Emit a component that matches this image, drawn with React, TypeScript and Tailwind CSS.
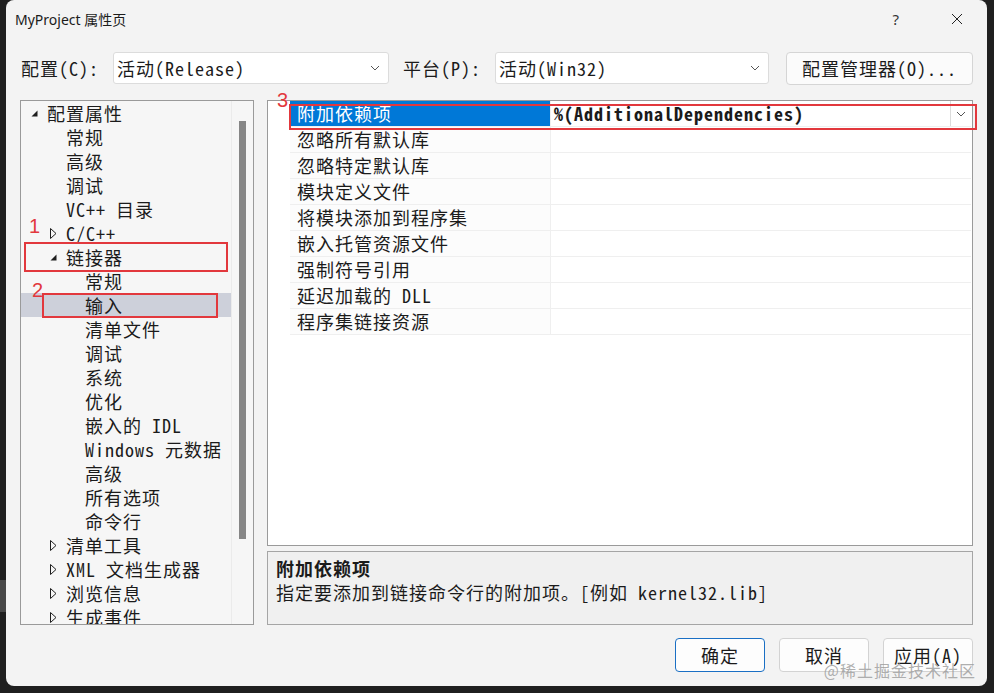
import React from "react";

const MONO = "font-['Noto_Sans_Mono_CJK_SC','Noto_Sans_CJK_SC',monospace]";

type TreeItem = {
  label: string;
  level: number;
  state?: "open" | "closed";
  selected?: boolean;
};

const tree: TreeItem[] = [
  { label: "配置属性", level: 0, state: "open" },
  { label: "常规", level: 1 },
  { label: "高级", level: 1 },
  { label: "调试", level: 1 },
  { label: "VC++ 目录", level: 1 },
  { label: "C/C++", level: 1, state: "closed" },
  { label: "链接器", level: 1, state: "open" },
  { label: "常规", level: 2 },
  { label: "输入", level: 2, selected: true },
  { label: "清单文件", level: 2 },
  { label: "调试", level: 2 },
  { label: "系统", level: 2 },
  { label: "优化", level: 2 },
  { label: "嵌入的 IDL", level: 2 },
  { label: "Windows 元数据", level: 2 },
  { label: "高级", level: 2 },
  { label: "所有选项", level: 2 },
  { label: "命令行", level: 2 },
  { label: "清单工具", level: 1, state: "closed" },
  { label: "XML 文档生成器", level: 1, state: "closed" },
  { label: "浏览信息", level: 1, state: "closed" },
  { label: "生成事件", level: 1, state: "closed" },
];

const props = [
  "附加依赖项",
  "忽略所有默认库",
  "忽略特定默认库",
  "模块定义文件",
  "将模块添加到程序集",
  "嵌入托管资源文件",
  "强制符号引用",
  "延迟加载的 DLL",
  "程序集链接资源",
];

function Chevron() {
  return (
    <svg width="10" height="6" viewBox="0 0 10 6" className="text-[#555]">
      <path d="M1 1 L5 5 L9 1" fill="none" stroke="currentColor" strokeWidth="1" />
    </svg>
  );
}

function Arrow({ state }: { state?: "open" | "closed" }) {
  if (state === "open")
    return (
      <svg width="7" height="7" viewBox="0 0 7 7">
        <path d="M6.5 0.5 L6.5 6.5 L0.5 6.5 Z" fill="#1e1e1e" />
      </svg>
    );
  if (state === "closed")
    return (
      <svg width="7" height="11" viewBox="0 0 7 11">
        <path d="M0.5 0.5 L6 5.5 L0.5 10.5 Z" fill="none" stroke="#1e1e1e" strokeWidth="1" />
      </svg>
    );
  return null;
}

function Select({ value, width }: { value: string; width: string }) {
  return (
    <div
      className={`flex h-[32px] ${width} items-center justify-between rounded-[3px] border border-[#dcdcdc] bg-white pl-[3px] pr-[8px]`}
    >
      <span>{value}</span>
      <Chevron />
    </div>
  );
}

export default function App() {
  return (
    <div className="relative h-[693px] w-[994px] overflow-hidden bg-[#1f1f1f]">
      <div className="absolute left-0 top-[580px] h-[32px] w-[6px] bg-[#474747]" />
      <div
        className={`ml-[6px] flex h-[686px] w-[981px] flex-col rounded-[8px] bg-[#f3f3f3] text-[18px] tracking-[1px] text-[#1b1b1b] ${MONO}`}
      >
        {/* title bar */}
        <div className="flex h-[38px] items-center pl-[9px] pr-[24px] font-['Noto_Sans','Noto_Sans_CJK_SC',sans-serif] text-[14px] tracking-normal">
          <span>MyProject 属性页</span>
          <span className="ml-auto mr-[52px] text-[15px] text-[#333]">?</span>
          <svg width="12" height="12" viewBox="0 0 12 12">
            <path d="M1 1 L11 11 M11 1 L1 11" stroke="#222" strokeWidth="1" />
          </svg>
        </div>

        {/* configuration row */}
        <div className="mb-[16px] mt-[14px] flex h-[32px] items-center pl-[15px]">
          <span className="w-[92px]">配置(C):</span>
          <Select value="活动(Release)" width="w-[276px]" />
          <span className="ml-[14px] w-[92px]">平台(P):</span>
          <Select value="活动(Win32)" width="w-[274px]" />
          <div className="ml-[17px] flex h-[33px] w-[187px] items-center justify-center rounded-[4px] border border-[#d5d5d5] bg-[#fbfbfb]">
            配置管理器(O)...
          </div>
        </div>

        {/* main area */}
        <div className="flex h-[525px] gap-[13px] px-[14px]">
          {/* tree */}
          <div className="relative flex w-[234px] border border-[#9a9a9a] bg-[#f6f6f6]">
            <div className="flex-1 overflow-hidden">
              {tree.map((t, i) => (
                <div
                  key={i}
                  className={`flex h-[24px] items-center whitespace-nowrap ${t.selected ? "bg-[#cdd0da]" : ""}`}
                  style={{ paddingLeft: 10 + t.level * 19 }}
                >
                  <span className="flex w-[16px] items-center">
                    <Arrow state={t.state} />
                  </span>
                  <span>{t.label}</span>
                </div>
              ))}
            </div>
            <div className="w-[22px] border-l border-[#ebebeb] pl-[7px] pt-[20px]">
              <div className="h-[418px] w-[7px] bg-[#868686]" />
            </div>
            {/* annotations */}
            <div className="absolute left-[3px] top-[141px] h-[30px] w-[204px] border-2 border-[#e2383d]" />
            <div className="absolute left-[21px] top-[192px] h-[25px] w-[176px] border-2 border-[#e2383d]" />
            <span className="absolute left-[8px] top-[115px] font-['Liberation_Sans',sans-serif] text-[20px] leading-none tracking-normal text-[#e2383d]">
              1
            </span>
            <span className="absolute left-[11px] top-[179px] font-['Liberation_Sans',sans-serif] text-[20px] leading-none tracking-normal text-[#e2383d]">
              2
            </span>
          </div>

          {/* right column */}
          <div className="flex flex-1 flex-col gap-[5px]">
            <div className="relative h-[446px] border border-[#9a9a9a] bg-white pl-[22px] pr-[1px]">
              {props.map((p, i) => (
                <div
                  key={i}
                  className="flex h-[26px] border-b border-[#efefef]"
                >
                  <div
                    className={`flex w-[261px] items-center border-r border-[#efefef] pl-[7px] ${i === 0 ? "bg-[#0078d7] text-white" : "bg-[#fcfcfc]"}`}
                  >
                    {p}
                  </div>
                  <div className="flex flex-1 items-center pl-[3px] font-bold">
                    {i === 0 && (
                      <>
                        <span>%(AdditionalDependencies)</span>
                        <div className="ml-auto flex h-full w-[21px] items-center justify-center border-l border-[#dcdcdc]">
                          <Chevron />
                        </div>
                      </>
                    )}
                  </div>
                </div>
              ))}
              <div className="absolute left-[21px] top-[3px] h-[26px] w-[688px] border-2 border-[#e2383d]" />
              <span className="absolute left-[9px] top-[-11px] font-['Liberation_Sans',sans-serif] text-[20px] leading-none tracking-normal text-[#e2383d]">
                3
              </span>
            </div>
            <div className="flex-1 border border-[#a5a5a5] bg-[#f0f0f0] px-[8px] pt-[3px]">
              <div className="h-[24px] font-bold">附加依赖项</div>
              <div className="h-[26px] leading-[26px]">指定要添加到链接命令行的附加项。[例如 kernel32.lib]</div>
            </div>
          </div>
        </div>

        {/* buttons */}
        <div className="relative mt-[13px] flex justify-end gap-[14px] pr-[14px]">
          <div className="flex h-[34px] w-[90px] items-center justify-center rounded-[4px] border border-[#1a6fc4] bg-[#fdfdfd]">
            确定
          </div>
          <div className="flex h-[34px] w-[90px] items-center justify-center rounded-[4px] border border-[#d3d3d3] bg-[#fdfdfd]">
            取消
          </div>
          <div className="flex h-[34px] w-[90px] items-center justify-center rounded-[4px] border border-[#d3d3d3] bg-[#fdfdfd]">
            应用(A)
          </div>
          <span className="absolute right-[11px] top-[20px] font-['Noto_Sans_CJK_SC',sans-serif] text-[16px] tracking-[1px] text-[#9a9a9a]/80">
            @稀土掘金技术社区
          </span>
        </div>
      </div>
    </div>
  );
}
